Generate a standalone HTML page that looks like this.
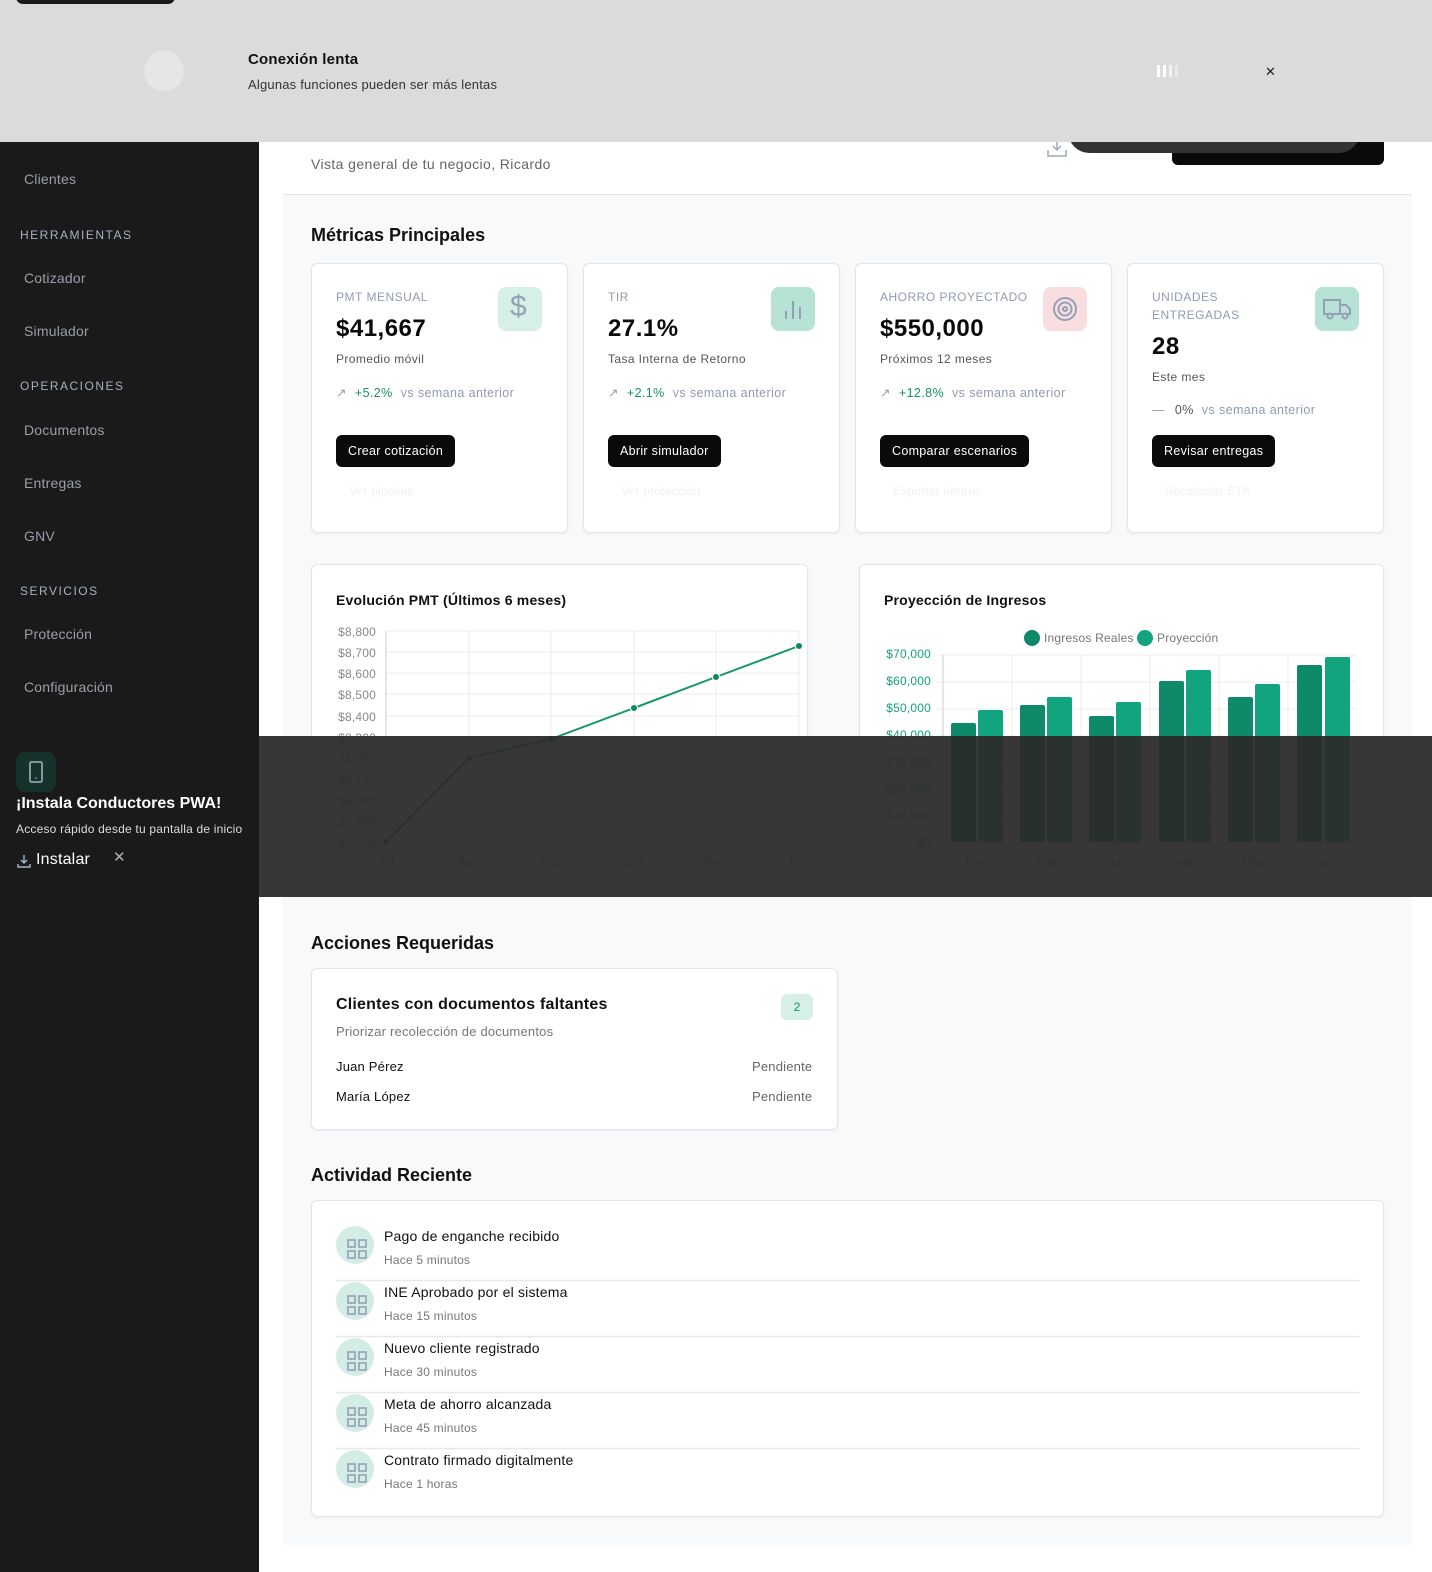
<!DOCTYPE html>
<html><head><meta charset="utf-8"><style>
*{box-sizing:border-box;margin:0;padding:0}
body{width:1432px;height:1572px;position:relative;overflow:hidden;background:#fff;font-family:"Liberation Sans",sans-serif;color:#111;letter-spacing:.2px}
.a{position:absolute}
.side{left:0;top:0;width:259px;height:1572px;background:#1a1a1a}
.nav{left:24px;font-size:14px;color:#9a9ea6}
.sec{left:20px;font-size:12px;letter-spacing:1.5px;color:#a8b0c0}
.content{left:283px;top:195px;width:1129px;height:1350px;background:#f8f9fa}
.card{background:#fff;border:1px solid #e3e5e8;border-radius:6px;box-shadow:0 1px 2px rgba(0,0,0,.05)}
.lbl{font-size:12px;color:#8f9bb3;letter-spacing:.5px;line-height:18px}
.big{font-size:24px;font-weight:bold;color:#0a0a0a;letter-spacing:.5px}
.sub{font-size:12px;color:#555;letter-spacing:.4px}
.tr{font-size:12.5px;color:#8f9bb3;letter-spacing:.4px}
.tr b{color:#14935f;font-weight:normal;margin:0 8px 0 8px}
.btn{background:#0a0a0a;color:#fff;font-size:12.5px;border-radius:6px;height:32px;line-height:32px;padding:0 12px;letter-spacing:.3px}
.ghost{font-size:12px;color:#eef1f5}
.ico{width:44px;height:44px;border-radius:8px}
h2{font-size:18px;font-weight:600;color:#111;letter-spacing:0}
.act{left:336px;width:1023px;height:56px}
.act .c{position:absolute;left:0;top:0;width:38px;height:38px;border-radius:50%;background:#d3ede4}
.act .t{position:absolute;left:48px;top:2px;font-size:14px}
.act .s{position:absolute;left:48px;top:27px;font-size:12px;color:#777}
</style></head><body>
<div class="a side"></div>
<div class="a nav" style="top:171px">Clientes</div>
<div class="a sec" style="top:228px">HERRAMIENTAS</div>
<div class="a nav" style="top:270px">Cotizador</div>
<div class="a nav" style="top:323px">Simulador</div>
<div class="a sec" style="top:379px">OPERACIONES</div>
<div class="a nav" style="top:422px">Documentos</div>
<div class="a nav" style="top:475px">Entregas</div>
<div class="a nav" style="top:528px">GNV</div>
<div class="a sec" style="top:584px">SERVICIOS</div>
<div class="a nav" style="top:626px">Protección</div>
<div class="a nav" style="top:679px">Configuración</div>
<div class="a" style="left:16px;top:752px;width:40px;height:40px;border-radius:9px;background:#15332b"></div>
<svg class="a" style="left:26px;top:760px" width="20" height="24" viewBox="0 0 20 24"><rect x="4" y="2" width="12" height="20" rx="1.5" fill="none" stroke="#a8b4c4" stroke-width="1.5"/><circle cx="10" cy="18" r="0.8" fill="#a8b4c4"/></svg>
<div class="a" style="left:16px;top:795px;font-size:16px;font-weight:bold;color:#fff;letter-spacing:0">¡Instala Conductores PWA!</div>
<div class="a" style="left:16px;top:822px;font-size:12px;color:#ddd">Acceso rápido desde tu pantalla de inicio</div>
<svg class="a" style="left:16px;top:853px" width="16" height="16" viewBox="0 0 16 16" fill="none" stroke="#a8b4c4" stroke-width="1.4"><path d="M8 2v8M5 7l3 3 3-3M2 11v3h12v-3"/></svg>
<div class="a" style="left:36px;top:851px;font-size:16px;color:#fff">Instalar</div>
<div class="a" style="left:113px;top:848px;font-size:15px;color:#a8b4c4">✕</div>

<div class="a content"></div>
<div class="a" style="left:283px;top:194px;width:1129px;height:1px;background:#e2e5ea"></div>
<div class="a" style="left:311px;top:156px;font-size:14px;color:#666;letter-spacing:.4px">Vista general de tu negocio, Ricardo</div>
<svg class="a" style="left:1046px;top:140px" width="22" height="18" viewBox="0 0 22 18" fill="none" stroke="#9aa8bc" stroke-width="1.5"><path d="M11 1v9M7 6l4 4 4-4M2 10v6h18v-6"/></svg>
<div class="a" style="left:1172px;top:130px;width:212px;height:35px;background:#0a0a0a;border-radius:6px"></div>
<div class="a" style="left:1068px;top:110px;width:292px;height:43px;background:#333;border-radius:30px"></div>

<h2 class="a" style="left:311px;top:225px">Métricas Principales</h2>

<div class="a card" style="left:311px;top:263px;width:257px;height:270px"></div>
<div class="a card" style="left:583px;top:263px;width:257px;height:270px"></div>
<div class="a card" style="left:855px;top:263px;width:257px;height:270px"></div>
<div class="a card" style="left:1127px;top:263px;width:257px;height:270px"></div>

<div class="a lbl" style="left:336px;top:288px">PMT MENSUAL</div>
<div class="a big" style="left:336px;top:315px">$41,667</div>
<div class="a sub" style="left:336px;top:352px">Promedio móvil</div>
<div class="a tr" style="left:336px;top:385px">↗<b>+5.2%</b>vs semana anterior</div>
<div class="a btn" style="left:336px;top:435px">Crear cotización</div>
<div class="a ghost" style="left:349px;top:484px">Ver pipeline</div>
<div class="a ico" style="left:498px;top:287px;background:#d6efe7"></div>
<div class="a" style="left:510px;top:290px;font-size:30px;color:#94a0b8">$</div>

<div class="a lbl" style="left:608px;top:288px">TIR</div>
<div class="a big" style="left:608px;top:315px">27.1%</div>
<div class="a sub" style="left:608px;top:352px">Tasa Interna de Retorno</div>
<div class="a tr" style="left:608px;top:385px">↗<b>+2.1%</b>vs semana anterior</div>
<div class="a btn" style="left:608px;top:435px">Abrir simulador</div>
<div class="a ghost" style="left:621px;top:484px">Ver protección</div>
<div class="a ico" style="left:771px;top:287px;background:#b7e3d6"></div>
<svg class="a" style="left:783px;top:297px" width="20" height="24" fill="none" stroke="#94a0b8" stroke-width="2"><path d="M3 22v-8M10 22V4M17 22v-12"/></svg>

<div class="a lbl" style="left:880px;top:288px">AHORRO PROYECTADO</div>
<div class="a big" style="left:880px;top:315px">$550,000</div>
<div class="a sub" style="left:880px;top:352px">Próximos 12 meses</div>
<div class="a tr" style="left:880px;top:385px">↗<b>+12.8%</b>vs semana anterior</div>
<div class="a btn" style="left:880px;top:435px">Comparar escenarios</div>
<div class="a ghost" style="left:893px;top:484px">Exportar ahorro</div>
<div class="a ico" style="left:1043px;top:287px;background:#f8dede"></div>
<svg class="a" style="left:1051px;top:295px" width="28" height="28" fill="none" stroke="#94a0b8" stroke-width="2"><circle cx="14" cy="14" r="11"/><circle cx="14" cy="14" r="6.5"/><circle cx="14" cy="14" r="2"/></svg>

<div class="a lbl" style="left:1152px;top:288px">UNIDADES<br>ENTREGADAS</div>
<div class="a big" style="left:1152px;top:333px">28</div>
<div class="a sub" style="left:1152px;top:370px">Este mes</div>
<div class="a tr" style="left:1152px;top:403px"><span style="color:#8f9bb3">—</span><b style="color:#555;margin-left:10px">0%</b>vs semana anterior</div>
<div class="a btn" style="left:1152px;top:435px">Revisar entregas</div>
<div class="a ghost" style="left:1165px;top:484px">Recalcular ETA</div>
<div class="a ico" style="left:1315px;top:287px;background:#b7e3d6"></div>
<svg class="a" style="left:1321px;top:296px" width="32" height="26" fill="none" stroke="#94a0b8" stroke-width="2"><path d="M3 4h16v14H3zM19 9h6l4 4v5h-10"/><circle cx="9" cy="20" r="2.5" fill="#b7e3d6"/><circle cx="24" cy="20" r="2.5" fill="#b7e3d6"/></svg>

<div class="a card" style="left:311px;top:564px;width:497px;height:330px"></div>
<div class="a card" style="left:859px;top:564px;width:525px;height:330px"></div>
<div class="a" style="left:336px;top:592px;font-size:14px;font-weight:600">Evolución PMT (Últimos 6 meses)</div>
<div class="a" style="left:884px;top:592px;font-size:14px;font-weight:600">Proyección de Ingresos</div>

<svg class="a" style="left:0;top:0" width="1432" height="900" font-family="Liberation Sans, sans-serif" font-size="12">
<g stroke="#ececec"><path d="M386 631H799M386 652H799M386 673H799M386 694H799M386 716H799M386 737H799M386 758H799M386 779H799M386 800H799M386 821H799M386 842H799"/>
<path d="M469 631V850M551 631V850M634 631V850M716 631V850M799 631V850"/></g>
<path d="M386 631V850" stroke="#ccc"/>
<g fill="#888" text-anchor="end"><text x="376" y="636">$8,800</text><text x="376" y="657">$8,700</text><text x="376" y="678">$8,600</text><text x="376" y="699">$8,500</text><text x="376" y="721">$8,400</text><text x="376" y="742">$8,300</text><text x="376" y="763">$8,200</text><text x="376" y="784">$8,100</text><text x="376" y="805">$8,000</text><text x="376" y="826">$7,900</text><text x="376" y="847">$7,800</text></g>
<g fill="#888" text-anchor="middle"><text x="386" y="866">Jul</text><text x="469" y="866">Ago</text><text x="551" y="866">Sep</text><text x="634" y="866">Oct</text><text x="716" y="866">Nov</text><text x="799" y="866">Dic</text></g>
<path d="M386 842L469 758L551 739L634 708L716 677L799 646" fill="none" stroke="#16966c" stroke-width="2"/>
<g fill="#0e8a62" stroke="#fff"><circle cx="386" cy="842" r="3.5"/><circle cx="469" cy="758" r="3.5"/><circle cx="551" cy="739" r="3.5"/><circle cx="634" cy="708" r="3.5"/><circle cx="716" cy="677" r="3.5"/><circle cx="799" cy="646" r="3.5"/></g>

<circle cx="1032" cy="638" r="8" fill="#0e8a6a"/><text x="1044" y="642" fill="#777">Ingresos Reales</text>
<circle cx="1145" cy="638" r="8" fill="#12a37f"/><text x="1157" y="642" fill="#777">Proyección</text>
<g stroke="#eee"><path d="M936 655H1356M936 682H1356M936 709H1356M936 736H1356M936 763H1356M936 790H1356M936 817H1356M936 844H1356"/>
<path d="M1012 655V852M1081 655V852M1150 655V852M1219 655V852M1288 655V852"/></g>
<path d="M943 655V852" stroke="#ccc"/>
<g fill="#14a37a" text-anchor="end"><text x="931" y="658">$70,000</text><text x="931" y="685">$60,000</text><text x="931" y="712">$50,000</text><text x="931" y="739">$40,000</text><text x="931" y="766">$30,000</text><text x="931" y="793">$20,000</text><text x="931" y="820">$10,000</text><text x="931" y="847">$0</text></g>
<g fill="#888" text-anchor="middle"><text x="977" y="866">Ene</text><text x="1046" y="866">Feb</text><text x="1115" y="866">Mar</text><text x="1184" y="866">Abr</text><text x="1254" y="866">May</text><text x="1323" y="866">Jun</text></g>
<g fill="#0e8a6a"><rect x="951" y="723" width="25" height="119" rx="2"/><rect x="1020" y="705" width="25" height="137" rx="2"/><rect x="1089" y="716" width="25" height="126" rx="2"/><rect x="1159" y="681" width="25" height="161" rx="2"/><rect x="1228" y="697" width="25" height="145" rx="2"/><rect x="1297" y="665" width="25" height="177" rx="2"/></g>
<g fill="#12a37f"><rect x="978" y="710" width="25" height="132" rx="2"/><rect x="1047" y="697" width="25" height="145" rx="2"/><rect x="1116" y="702" width="25" height="140" rx="2"/><rect x="1186" y="670" width="25" height="172" rx="2"/><rect x="1255" y="684" width="25" height="158" rx="2"/><rect x="1325" y="657" width="25" height="185" rx="2"/></g>
</svg>

<h2 class="a" style="left:311px;top:933px">Acciones Requeridas</h2>
<div class="a card" style="left:311px;top:968px;width:527px;height:162px"></div>
<div class="a" style="left:336px;top:996px;font-size:16px;font-weight:600">Clientes con documentos faltantes</div>
<div class="a" style="left:781px;top:994px;width:32px;height:26px;border-radius:6px;background:#d6efe7;color:#14935f;font-size:12px;text-align:center;line-height:26px">2</div>
<div class="a" style="left:336px;top:1024px;font-size:13px;color:#777">Priorizar recolección de documentos</div>
<div class="a" style="left:336px;top:1059px;font-size:13px">Juan Pérez</div>
<div class="a" style="left:752px;top:1059px;font-size:13px;color:#666">Pendiente</div>
<div class="a" style="left:336px;top:1089px;font-size:13px">María López</div>
<div class="a" style="left:752px;top:1089px;font-size:13px;color:#666">Pendiente</div>

<h2 class="a" style="left:311px;top:1165px">Actividad Reciente</h2>
<div class="a card" style="left:311px;top:1200px;width:1073px;height:317px"></div>
<div class="a act" style="top:1226px"><div class="c"></div><div class="t">Pago de enganche recibido</div><div class="s">Hace 5 minutos</div></div>
<div class="a act" style="top:1282px"><div class="c"></div><div class="t">INE Aprobado por el sistema</div><div class="s">Hace 15 minutos</div></div>
<div class="a act" style="top:1338px"><div class="c"></div><div class="t">Nuevo cliente registrado</div><div class="s">Hace 30 minutos</div></div>
<div class="a act" style="top:1394px"><div class="c"></div><div class="t">Meta de ahorro alcanzada</div><div class="s">Hace 45 minutos</div></div>
<div class="a act" style="top:1450px"><div class="c"></div><div class="t">Contrato firmado digitalmente</div><div class="s">Hace 1 horas</div></div>
<svg class="a" style="left:0;top:0" width="1432" height="1572" fill="none" stroke="#94a0b8" stroke-width="1.6">
<g id="g"><rect x="348" y="1240" width="7" height="7"/><rect x="359" y="1240" width="7" height="7"/><rect x="348" y="1251" width="7" height="7"/><rect x="359" y="1251" width="7" height="7"/></g>
<use href="#g" y="56"/><use href="#g" y="112"/><use href="#g" y="168"/><use href="#g" y="224"/>
<path d="M336 1280.5H1359M336 1336.5H1359M336 1392.5H1359M336 1448.5H1359" stroke="#e8e8e8"/>
</svg>

<div class="a" style="left:259px;top:736px;width:1173px;height:161px;background:rgba(42,42,42,.94)"></div>

<div class="a" style="left:0;top:0;width:1432px;height:142px;background:#dbdbdb"></div>
<div class="a" style="left:16px;top:-10px;width:159px;height:14px;background:#1a1a1a;border-radius:7px"></div>
<div class="a" style="left:144px;top:51px;width:40px;height:40px;border-radius:50%;background:#e6e6e6"></div>
<div class="a" style="left:248px;top:51px;font-size:15px;font-weight:600">Conexión lenta</div>
<div class="a" style="left:248px;top:77px;font-size:13px;color:#333">Algunas funciones pueden ser más lentas</div>
<div class="a" style="left:1157px;top:65px;width:3px;height:12px;background:#fff"></div>
<div class="a" style="left:1163px;top:65px;width:3px;height:12px;background:#fff"></div>
<div class="a" style="left:1169px;top:65px;width:3px;height:12px;background:#f2f2f2"></div>
<div class="a" style="left:1175px;top:65px;width:3px;height:12px;background:#e8e8e8"></div>
<div class="a" style="left:1265px;top:64px;font-size:13px;color:#222">✕</div>
</body></html>
